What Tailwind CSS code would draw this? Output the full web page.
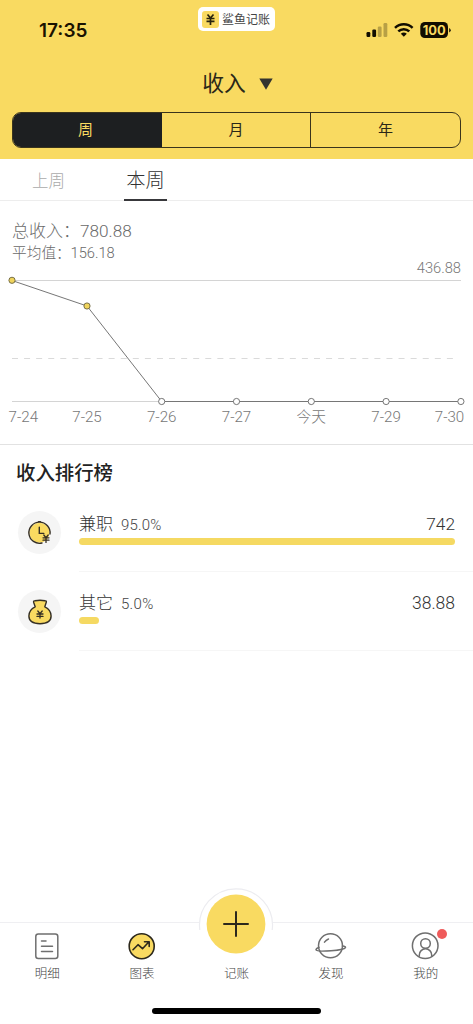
<!DOCTYPE html>
<html lang="zh-CN">
<head>
<meta charset="utf-8">
<meta name="viewport" content="width=device-width, initial-scale=1">
<title>鲨鱼记账</title>
<script src="https://cdn.jsdelivr.net/npm/@tailwindcss/browser@4"></script>
</head>
<body class="bg-white overflow-hidden">
<div class="w-[473px] h-[1024px] flex flex-col bg-white text-[#333] font-light font-['Roboto','Noto_Sans_CJK_SC',sans-serif]">

  <header class="h-[159px] shrink-0 bg-[#f9da61] px-3 flex flex-col">
    <div class="h-[60px] flex pl-[27px]">
      <div class="w-[159px] pt-[19px] text-[19px] leading-[24px] font-semibold text-[#1a1200] font-['Inter',sans-serif]">17:35</div>
      <div class="mt-[7px] w-[77px] h-[24px] bg-white rounded-[5px] flex items-center pl-[4px] gap-[3px] shrink-0">
        <svg class="shrink-0" width="17" height="17" viewBox="0 0 17 17"><rect width="17" height="17" rx="3" fill="#f9da61"/><path d="M5.500 3.500l3 3.500 3-3.500M4.500 7.500h8M4.500 10.300h8M8.500 7v7" stroke="#28240f" stroke-width="1.700" fill="none"/></svg>
        <span class="text-[12px] leading-[16px] font-normal text-[#444] whitespace-nowrap pt-px">鲨鱼记账</span>
      </div>
      <svg class="mt-[20px] ml-auto mr-[7px] shrink-0" width="88" height="20" viewBox="0 0 88 20">
        <g fill="#120d00"><rect x="0.500" y="12" width="3.800" height="5" rx="1.200"/><rect x="6.300" y="9.500" width="3.800" height="7.500" rx="1.200"/><g opacity=".28"><rect x="11.800" y="6.500" width="3.800" height="10.500" rx="1.200"/><rect x="17.500" y="3" width="3.800" height="14" rx="1.200"/></g></g>
        <g fill="none" stroke="#120d00" stroke-width="2.500"><path d="M29 7.800a12.700 12.700 0 0 1 17.600 0"/><path d="M32.300 11.400a7.900 7.900 0 0 1 11 0"/></g><path d="M34.800 13.800a4.500 4.500 0 0 1 6 0l-3 2.900z" fill="#120d00"/>
        <rect x="54.300" y="2" width="27.700" height="16" rx="4.500" fill="#120d00"/><path d="M83.200 8v4.500q1.500-.7 1.500-2.250T83.200 8z" fill="#120d00"/>
        <text x="68.200" y="14.800" text-anchor="middle" textLength="23" lengthAdjust="spacingAndGlyphs" font-family="Inter" font-size="13" font-weight="700" fill="#f9da61">100</text>
      </svg>
    </div>
    <div class="h-[52px] flex items-center justify-center gap-[13px] pb-[5px] pl-[2px]">
      <span class="text-[21.800px] leading-[30px] font-normal text-[#2a2718] pt-px">收入</span>
      <svg width="14" height="12" viewBox="0 0 14 12"><path d="M.3.500h13.400L7 11.700z" fill="#33332f"/></svg>
    </div>
    <div class="h-[36px] border border-[#3a341c] rounded-[9px] grid grid-cols-3 overflow-hidden text-[15px] font-normal text-[#2a2718]">
      <div class="bg-[#1d1f21] text-[#f9da61] flex items-center justify-center pt-px pr-1">周</div>
      <div class="flex items-center justify-center pt-px border-r border-[#3a341c]">月</div>
      <div class="flex items-center justify-center pt-px">年</div>
    </div>
  </header>

  <nav class="h-[42px] shrink-0 border-b border-[#ededed] flex">
    <div class="w-[97px] flex items-center justify-center text-[16.500px] text-[#aaa] pt-[5px]">上周</div>
    <div class="w-[97px] flex justify-center">
      <div class="w-[43px] h-[42px] border-b-2 border-[#38383b] flex items-center justify-center text-[19.300px] whitespace-nowrap pt-[5px]">本周</div>
    </div>
  </nav>

  <section class="h-[244px] shrink-0 border-b border-[#e2e2e2] pt-[18px] flex flex-col">
    <div class="h-[23px] pl-3 text-[17.200px] leading-[24px] text-[#6a6a6a] flex whitespace-nowrap"><span class="w-[68px] text-[17px]">总收入：</span><span>780.88</span></div>
    <div class="h-[22px] pl-3 text-[14.700px] leading-[23px] text-[#6a6a6a] flex whitespace-nowrap"><span class="w-[58.500px]">平均值：</span><span>156.18</span></div>
    <svg width="473" height="178" viewBox="0 264 473 178" class="overflow-visible" font-size="14.700" fill="#777">
      <text x="461" y="273" text-anchor="end">436.88</text>
      <path d="M12 280.500H461M12 401.500H162" stroke="#d4d4d4"/>
      <path d="M12 358.500H456" stroke="#dadada" stroke-dasharray="6 6.080"/>
      <path d="M12 280.500L87 306L161.700 401.500H461" fill="none" stroke="#666" stroke-width=".9"/>
      <g fill="#f0d45c" stroke="#6b6440" stroke-width=".9"><circle cx="12" cy="280.300" r="3.100"/><circle cx="87" cy="306" r="3.100"/></g>
      <g fill="#fff" stroke="#666" stroke-width=".9"><circle cx="161.700" cy="401.500" r="3.100"/><circle cx="236.500" cy="401.500" r="3.100"/><circle cx="311.300" cy="401.500" r="3.100"/><circle cx="386.100" cy="401.500" r="3.100"/><circle cx="460.900" cy="401.500" r="3.100"/></g>
      <g text-anchor="middle"><g font-size="15"><text x="23.300" y="422" textLength="29.500" lengthAdjust="spacingAndGlyphs">7-24</text><text x="87" y="422" textLength="29.500" lengthAdjust="spacingAndGlyphs">7-25</text><text x="161.700" y="422" textLength="29.500" lengthAdjust="spacingAndGlyphs">7-26</text><text x="236.500" y="422" textLength="29.500" lengthAdjust="spacingAndGlyphs">7-27</text><text x="386.100" y="422" textLength="29.500" lengthAdjust="spacingAndGlyphs">7-29</text><text x="449.500" y="422" textLength="29.500" lengthAdjust="spacingAndGlyphs">7-30</text></g><text x="311.300" y="422">今天</text></g>
    </svg>
  </section>

  <main class="flex-1 flex flex-col">
    <h2 class="h-[48px] pl-4 pt-[15px] text-[19.400px] leading-[28px] font-medium text-[#222]">收入排行榜</h2>
    <div class="h-[79px] flex pl-[18px]">
      <div class="mt-[18px] size-[43px] rounded-full bg-[#f5f5f5] flex items-center justify-center">
        <svg width="26" height="26" viewBox="0 0 26 26" fill="none" stroke="#352f24" stroke-width="1.400" stroke-linecap="round"><circle cx="12.500" cy="12.700" r="10" fill="#f9da61" stroke="none"/><path d="M23 14A10.600 10.600 0 1 0 15 23M11.500 1.600h2M12.300 7.200v6.200h4.500"/><path d="M16.800 15l2.200 2.700 2.200-2.700M16 17.800h6M16 20.200h6M19 17.800v4.600" stroke-width="1.300"/></svg>
      </div>
      <div class="ml-[18px] flex-1 border-b border-[#f6f6f6] pt-[20px] pr-[18px]">
        <div class="h-[24px] flex items-center"><span class="text-[17px]">兼职</span><span class="ml-[8px] text-[15px] text-[#444] pt-px w-[42px] whitespace-nowrap tracking-[.2px]">95.0%</span><span class="ml-auto text-[17.300px]">742</span></div>
        <div class="mt-[1px] h-[7px] rounded-full bg-[#f5d962]"></div>
      </div>
    </div>
    <div class="h-[79px] flex pl-[18px]">
      <div class="mt-[18px] size-[43px] rounded-full bg-[#f5f5f5] flex items-center justify-center">
        <svg width="26" height="26" viewBox="0 0 26 26" stroke="#352f24" stroke-width="1.400" stroke-linecap="round" stroke-linejoin="round"><path d="M8.200 7.800L6.700 3.500Q6.200 1.700 8 1.700Q13 .7 18 1.700Q19.800 1.700 19.200 3.500L17.800 7.800C21.500 9.500 24.100 13 24.100 17C24.100 22 20.500 24.700 13 24.700S1.900 22 1.900 17C1.900 13 4.500 9.500 8.200 7.800z" fill="#f9da61"/><path d="M10.800 12l2.200 2.600 2.200-2.600M10 15h6M10 17.400h6M13 15v4" fill="none" stroke-width="1.300"/></svg>
      </div>
      <div class="ml-[18px] flex-1 border-b border-[#f6f6f6] pt-[20px] pr-[18px]">
        <div class="h-[24px] flex items-center"><span class="text-[17px]">其它</span><span class="ml-[8px] text-[15px] text-[#444] pt-px tracking-[.3px]">5.0%</span><span class="ml-auto text-[17.500px] pb-px">38.88</span></div>
        <div class="mt-[1px] h-[7px] w-[20px] rounded-full bg-[#f5d962]"></div>
      </div>
    </div>
  </main>

  <footer class="h-[102px] shrink-0 border-t border-[#efeff2] flex flex-col">
    <div class="h-[62px] grid grid-cols-5 text-[12.500px] leading-[18px] text-[#444]">
      <div class="flex flex-col items-center">
        <svg class="mt-[8px] mb-[4px]" width="30" height="30" viewBox="0 0 30 30" fill="none" stroke="#6f6f6f" stroke-width="1.500" stroke-linecap="round"><rect x="3.800" y="3" width="22" height="24.500" rx="2.500"/><path d="M9.500 10h4.500M9.500 15.200h11M9.500 20.500h11"/></svg>
        <span>明细</span>
      </div>
      <div class="flex flex-col items-center">
        <svg class="mt-[8px] mb-[4px]" width="30" height="30" viewBox="0 0 30 30" fill="none" stroke="#2c281c" stroke-width="1.600" stroke-linecap="round" stroke-linejoin="round"><circle cx="14.700" cy="15.200" r="12.500" fill="#f9da61"/><path d="M6 18.700l5-5 4.500 4 6-6.500M17.500 10.800h4.700v4.700"/></svg>
        <span>图表</span>
      </div>
      <div class="relative flex flex-col items-center">
        <svg class="absolute -top-[37px]" width="76" height="76" viewBox="0 0 76 76" fill="none"><circle cx="38" cy="38" r="36.500" fill="#fff"/><path d="M1.800 44A36.500 36.500 0 1 1 74.200 44" stroke="#ececf0" stroke-width="1.200"/><circle cx="38" cy="38" r="29.400" fill="#f9da61"/><path d="M26 38h24M38 26v24" stroke="#2c281c" stroke-width="2" stroke-linecap="round"/></svg>
        <span class="mt-[42px]">记账</span>
      </div>
      <div class="flex flex-col items-center">
        <svg class="mt-[8px] mb-[4px]" width="32" height="30" viewBox="0 0 32 30" fill="none" stroke="#6f6f6f" stroke-width="1.500" stroke-linecap="round"><circle cx="15.500" cy="14.700" r="12"/><path d="M9.500 11.200Q11 9 13.500 8M4 16.300Q.8 17.700 1 18.700C1.200 20.500 9 20.300 16 19.800S30.300 17.800 30.500 16.300Q30.500 15.300 27.400 15"/></svg>
        <span>发现</span>
      </div>
      <div class="relative flex flex-col items-center">
        <svg class="mt-[8px] mb-[4px]" width="30" height="30" viewBox="0 0 30 30" fill="none" stroke="#6f6f6f" stroke-width="1.500"><circle cx="14.200" cy="14.700" r="12.800"/><circle cx="14.500" cy="12.500" r="4.800"/><path d="M8.300 25.700v-1.700a6.200 6.200 0 0 1 12.400 0v1.700"/></svg>
        <span>我的</span>
        <i class="absolute top-[6px] left-[59px] size-[10px] rounded-full bg-[#ef5b5b]"></i>
      </div>
    </div>
    <div class="mt-[23px] ml-[152px] w-[169px] h-[6px] rounded-full bg-black"></div>
  </footer>
</div>
</body>
</html>
